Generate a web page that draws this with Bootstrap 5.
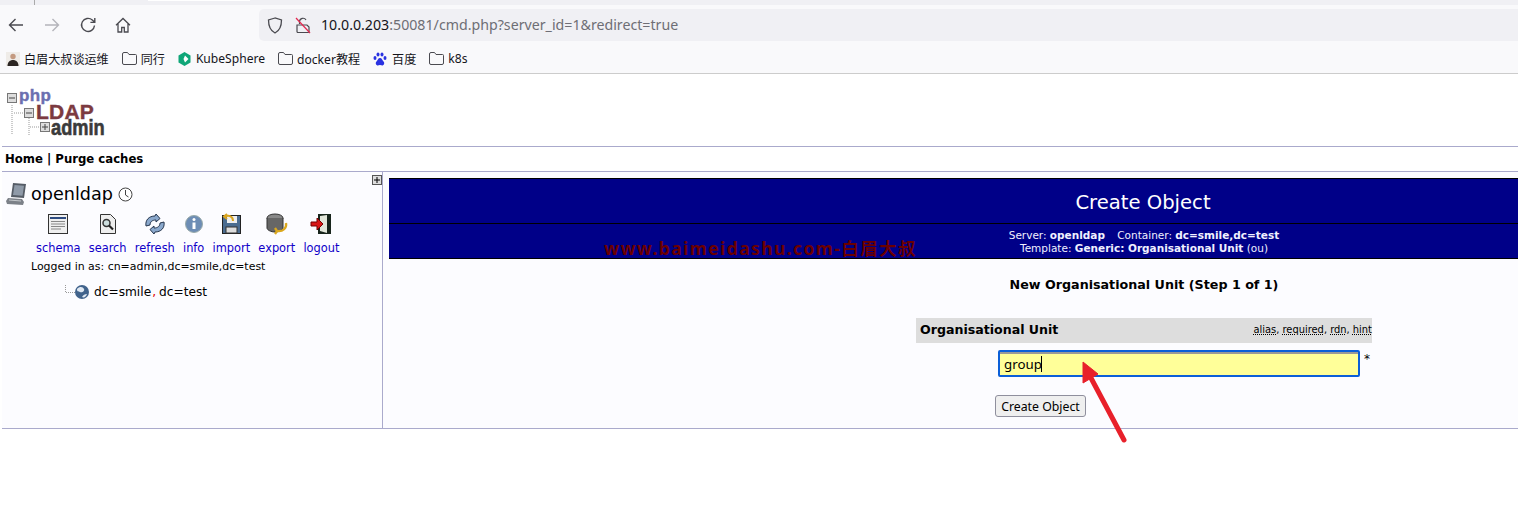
<!DOCTYPE html>
<html lang="en">
  <head>
    <meta charset="UTF-8" />
    <title>phpLDAPadmin</title>
    <link href="https://cdn.jsdelivr.net/npm/bootstrap@5.3.0/dist/css/bootstrap.min.css" rel="stylesheet" />
    <style>
      html, body { height: 513px; overflow: hidden; background: #fff; }
      body { width: 1518px; position: relative; font-family: "DejaVu Sans", Verdana, sans-serif; color: #000; }
      .tab-strip { height: 5px; background: #f0f0f4; position: relative; }
      .tab-strip .sliver { position: absolute; left: 148px; top: 0; width: 102px; height: 1px; background: #fff; }
      .tab-strip .sep { position: absolute; left: 34px; top: 0; width: 1px; height: 5px; background: #aaa; }
      .tool-bar { height: 39px; background: #f9f9fb; padding-top: 1px; }
      .nav-btn { width: 16px; height: 16px; flex: none; }
      .url-box { position: absolute; left: 259px; top: 9px; right: 0; height: 32px; background: #f0f0f4; border-radius: 5px 0 0 5px;
        font: 14.2px "Noto Sans", sans-serif; color: #15141a; padding-left: 62px; line-height: 32px; }
      .url-box em { font-style: normal; color: #6e6e75; }
      .url-box svg { position: absolute; top: 8px; }
      .book-bar { height: 29px; background: #f9f9fb; border-bottom: 1px solid #ccc; padding-left: 6px; gap: 13px;
        font: 12.1px "Noto Sans", "Noto Sans CJK SC", sans-serif; color: #15141a; box-sizing: content-box; }
      .book-item { display: flex; align-items: center; gap: 4px; }
      .logo-area { height: 72px; position: relative; }
      .logo-word { position: absolute; font-family: "Liberation Sans", Arial, sans-serif; font-weight: 700; transform-origin: left center; -webkit-text-stroke: .4px currentColor; }
      .w-php { left: 19px; top: 15px; font-size: 17px; line-height: 13px; color: #6b6fb0; letter-spacing: .4px; }
      .w-ldap { left: 36px; top: 30px; font-size: 21px; line-height: 15px; color: #7c3a40; letter-spacing: .2px; }
      .w-admin { left: 51px; top: 46px; font-size: 22px; line-height: 15px; color: #3a3a3a; transform: scaleX(.83); -webkit-text-stroke: .6px currentColor; }
      .logo-area svg { position: absolute; left: 0; top: 0; }
      .menu-row { margin-left: 2px; border-top: 1px solid #aaaacc; border-bottom: 1px solid #aaaacc; height: 26px; padding-left: 3px;
        font-size: 11.7px; font-weight: 700; line-height: 24px; }
      .page-row { height: 256px; margin-left: 2px; border-bottom: 1px solid #aaaacc; box-sizing: content-box; background: #fcfcff; }
      .side-col { width: 381px; flex: none; border-right: 1px solid #aaaacc; position: relative; }
      .expand-box { position: absolute; right: 0; top: 3px; width: 10px; height: 10px; }
      .server-name { font-size: 17.6px; line-height: 24px; padding: 10px 0 0 4px; gap: 4px; }
      .side-tools { padding-left: 34px; gap: 8.2px; margin-top: 7px; font-size: 11.4px; }
      .side-tool { text-align: center; color: #1000c8; line-height: 14px; }
      .side-tool svg { display: block; margin: 0 auto 6px; }
      .logged-as { font-size: 10.95px; margin: 5px 0 0 29px; line-height: 14px; }
      .tree-row { padding-left: 63px; margin-top: 9px; font-size: 12.2px; gap: 3px; line-height: 18px; }
      .tree-row b { font-weight: 400; color: #e00000; margin: 0 3px 0 1px; }
      .main-col { padding-left: 6px; flex-grow: 1; padding-top: 6px; min-width: 0; }
      .title-band { background: #000088; color: #fff; border: solid #000; border-width: 1px 0; height: 81px; text-align: center; padding-left: 381px; }
      .title-top { height: 45px; line-height: 48px; font-size: 19.6px; margin-left: -381px; padding-left: 379px; border-bottom: 1px solid #000; }
      .title-sub { font-size: 10.5px; line-height: 13px; padding-top: 5px; color: #f0f0ff; }
      .title-sub span { margin-left: 9px; }
      .form-side { padding-left: 381px; }
      .step-line { text-align: center; font-size: 12.7px; font-weight: 700; margin-top: 17px; line-height: 18px; }
      .attr-wrap { width: 456px; margin: 24px auto 0; }
      .attr-head { background: #dddddd; height: 25px; padding: 0 0 0 4px; font-size: 12.6px; font-weight: 700; }
      .attr-hint { font-size: 9.9px; font-weight: 400; }
      .attr-hint u { text-decoration: underline dotted; }
      .attr-input { width: 362px; height: 27px; margin: 7px 0 0 82px; position: relative; }
      .attr-input input { width: 100%; height: 100%; background: #ffff99; border: 2px solid #0b5fd8; border-radius: 2px; box-shadow: inset 0 2px 0 #999; outline: 0; padding: 0 4px; caret-color: transparent;
        font: 13.3px "Noto Sans", sans-serif; color: #000; }
      .fake-caret { position: absolute; left: 43px; top: 6px; width: 1px; height: 16px; background: #000; }
      .req-star { position: absolute; left: 366px; top: 0; font-size: 12px; }
      .make-btn { margin: 18px 0 0 79px; width: 91px; height: 22px; padding: 0; background: #efefef; border: 1px solid #8f8f9d; border-radius: 3px;
        font: 12.3px "Noto Sans", sans-serif; color: #000; display: block; }
      .water-text { position: absolute; left: 604px; top: 237px; font: 700 17.5px/22px "Noto Sans", "Noto Sans CJK SC", sans-serif; color: #6b0000; letter-spacing: 1.4px; white-space: nowrap; }
      .arrow-over { position: absolute; left: 0; top: 0; pointer-events: none; }
    </style>
  </head>
  <body>
    <div class="tab-strip"><span class="sep"></span><span class="sliver"></span></div>

    <div class="tool-bar d-flex align-items-center">
      <svg class="nav-btn" style="margin-left:8px" viewBox="0 0 16 16" fill="none" stroke="#4a4a50" stroke-width="1.4"><path d="M15 8H1.5M7.5 2 1.5 8l6 6"/></svg>
      <svg class="nav-btn" style="margin-left:20px" viewBox="0 0 16 16" fill="none" stroke="#b4b4ba" stroke-width="1.4"><path d="M1 8h13.5M8.5 2l6 6-6 6"/></svg>
      <svg class="nav-btn" style="margin-left:20px" viewBox="0 0 16 16" fill="none" stroke="#4a4a50" stroke-width="1.4"><path d="M14.5 8.5A6.5 6.5 0 1 1 12.3 3L14.5 5M14.8 1v4.4h-4.4"/></svg>
      <svg class="nav-btn" style="margin-left:19px" viewBox="0 0 16 16" fill="none" stroke="#4a4a50" stroke-width="1.3"><path d="M1 8.2 8 1.5l7 6.7M3 6.5V15h3.7v-4.5h2.6V15H13V6.5"/></svg>
    </div>
    <div class="url-box">
      <svg style="left:8px" width="16" height="17" viewBox="0 0 16 17" fill="none" stroke="#4a4a50" stroke-width="1.3"><path d="M8 1 1.5 3c0 6 1.5 10.500 6.500 13 5-2.500 6.500-7 6.500-13z"/></svg>
      <svg style="left:36px" width="16" height="17" viewBox="0 0 16 17" fill="none" stroke-width="1.2"><path stroke="#4a4a50" d="M4.500 7V4.500a3.500 3.500 0 0 1 6.500-1.500M2 8h10l2 2v4.500a1 1 0 0 1-1 1H3a1 1 0 0 1-1-1z"/><path stroke="#e22850" d="M1 1l14 15"/></svg>
      10.0.0.203<em>:50081/cmd.php?server_id=1&amp;redirect=true</em>
    </div>

    <div class="book-bar d-flex align-items-center">
      <div class="book-item">
        <svg width="14" height="14" viewBox="0 0 14 14"><rect width="14" height="14" fill="#efece8"/><circle cx="7" cy="4.500" r="2.700" fill="#c49a80"/><path d="M1.500 14c0-4 2.500-6 5.500-6s5.500 2 5.500 6z" fill="#2b2522"/></svg>
        <span>白眉大叔谈运维</span>
      </div>
      <div class="book-item">
        <svg width="15" height="13" viewBox="0 0 15 13" fill="none" stroke="#4a4a50"><path d="M.5 2a1.500 1.500 0 0 1 1.500-1.500h3.500l1.500 2h6.500a1 1 0 0 1 1 1V11a1.500 1.500 0 0 1-1.500 1.500H2A1.500 1.500 0 0 1 .5 11z"/></svg>
        <span>同行</span>
      </div>
      <div class="book-item" style="gap:5px">
        <svg width="13" height="14" viewBox="0 0 13 14"><path d="M6.500 0 12.500 3.500v7L6.500 14 .5 10.500v-7z" fill="#0fa678"/><path d="M7 3.500 10.500 7 7 10.500 5.500 7z" fill="#fff"/></svg>
        <span>KubeSphere</span>
      </div>
      <div class="book-item">
        <svg width="15" height="13" viewBox="0 0 15 13" fill="none" stroke="#4a4a50"><path d="M.5 2a1.500 1.500 0 0 1 1.500-1.500h3.500l1.500 2h6.500a1 1 0 0 1 1 1V11a1.500 1.500 0 0 1-1.500 1.500H2A1.500 1.500 0 0 1 .5 11z"/></svg>
        <span>docker教程</span>
      </div>
      <div class="book-item" style="gap:5px">
        <svg width="14" height="14" viewBox="0 0 14 14" fill="#2932e1"><ellipse cx="2" cy="6" rx="1.500" ry="2"/><ellipse cx="5" cy="2.500" rx="1.500" ry="2"/><ellipse cx="9" cy="2.500" rx="1.500" ry="2"/><ellipse cx="12" cy="6" rx="1.500" ry="2"/><path d="M7 6c-2 0-2 2-3.500 3.500C2 11 3 13.500 5 13.500c1 0 1.300-.4 2-.4s1 .4 2 .4c2 0 3-2.500 1.500-4C9 8 9 6 7 6z"/></svg>
        <span>百度</span>
      </div>
      <div class="book-item">
        <svg width="15" height="13" viewBox="0 0 15 13" fill="none" stroke="#4a4a50"><path d="M.5 2a1.500 1.500 0 0 1 1.500-1.500h3.500l1.500 2h6.500a1 1 0 0 1 1 1V11a1.500 1.500 0 0 1-1.500 1.500H2A1.500 1.500 0 0 1 .5 11z"/></svg>
        <span>k8s</span>
      </div>
    </div>

    <div class="logo-area">
      <svg width="60" height="72" viewBox="0 0 60 72">
        <path d="M12 31v30M14 39h9M29 44v17M30 53h10" fill="none" stroke="#ccc" stroke-dasharray="1 1" stroke-width="2"/>
        <rect x="7.500" y="19.500" width="9" height="9" fill="#ddd" stroke="#777"/><path d="M9 24h6" stroke="#444"/>
        <rect x="24.500" y="34.500" width="9" height="9" fill="#ddd" stroke="#777"/><path d="M26 39h6" stroke="#444"/>
        <rect x="40.500" y="48.500" width="9" height="9" fill="#ddd" stroke="#777"/><path d="M42 53h6M45 50v6" stroke="#444"/>
      </svg>
      <span class="logo-word w-php">php</span>
      <span class="logo-word w-ldap">LDAP</span>
      <span class="logo-word w-admin">admin</span>
    </div>

    <div class="menu-row">Home | Purge caches</div>

    <div class="page-row d-flex">
      <div class="side-col">
        <svg class="expand-box" viewBox="0 0 10 10"><rect x=".5" y=".5" width="9" height="9" fill="#ddd" stroke="#555"/><path d="M2 5h6M5 2v6" stroke="#000"/></svg>
        <div class="server-name d-flex align-items-center">
          <svg width="21" height="24" viewBox="0 0 21 24"><path d="M7 1l13 1-2 14-13-1z" fill="#555c66"/><path d="M8.500 3l9.500.8-1.500 10-9.500-.8z" fill="#8f9aa8"/><path d="M2 16l14 1 2 3-1 3-16-1-1-3z" fill="#7c8188"/><path d="M3 18l12 1" stroke="#c4c8cc"/></svg>
          <span>openldap</span>
          <svg style="margin-left:1px" width="15" height="15" viewBox="0 0 15 15" fill="#fff" stroke="#444"><circle cx="7.500" cy="7.500" r="6.500"/><path d="M7.500 3v5l3 2" fill="none"/></svg>
        </div>
        <div class="side-tools d-flex">
          <div class="side-tool">
            <svg width="22" height="22" viewBox="0 0 22 22"><rect x="1.500" y="1.500" width="19" height="19" fill="#efefef" stroke="#333"/><path d="M3 5h16" stroke="#2c4a80" stroke-width="2"/><path d="M4 8.500h14M4 11h14M4 13.500h14M4 16h10" stroke="#888"/></svg>
            schema
          </div>
          <div class="side-tool">
            <svg width="22" height="22" viewBox="0 0 22 22"><path d="M3.500 1.500h10l5 5v14h-15z" fill="#eee" stroke="#333"/><circle cx="9.500" cy="10" r="3.500" fill="#cdd" stroke="#333" stroke-width="1.500"/><path d="M12 12.500l4 4" stroke="#222" stroke-width="2.200"/></svg>
            search
          </div>
          <div class="side-tool">
            <svg width="22" height="22" viewBox="0 0 22 22" fill="#8aa8cc" stroke="#26364e"><path d="M2 13C1 7 5 3 11 3l1-2 4 4.500-4 3.500V7C8 7 6 9 6 12z"/><path d="M20 9c1 6-3 10-9 10l-1 2-4-4.500L10 13v2c4 0 6-2 6-5z"/></svg>
            refresh
          </div>
          <div class="side-tool">
            <svg width="20" height="22" viewBox="0 0 20 22"><circle cx="10" cy="11" r="8.500" fill="#6d8db5" stroke="#9aa"/><circle cx="10" cy="6.500" r="1.500" fill="#fff"/><path d="M10 9.500v6.500" stroke="#fff" stroke-width="3"/></svg>
            info
          </div>
          <div class="side-tool">
            <svg width="22" height="22" viewBox="0 0 22 22"><rect x="2.500" y="2.500" width="18" height="18" fill="#4a6c90" stroke="#222"/><rect x="7" y="3" width="10" height="7" fill="#eee"/><rect x="6" y="14" width="11" height="6" fill="#ddd" stroke="#333"/><path d="M13 8C13 3 9 2 5 3.500M7 1 4 3.500 7 6" fill="none" stroke="#d9a520" stroke-width="2"/></svg>
            import
          </div>
          <div class="side-tool">
            <svg width="24" height="22" viewBox="0 0 24 22"><ellipse cx="10" cy="5" rx="8" ry="4" fill="#888" stroke="#333"/><path d="M2 5v10c0 2 4 4 8 4s8-2 8-4V5" fill="#666" stroke="#333"/><path d="M21 10c1 5-3 9-9 8M10 15l2 3-2 3" fill="none" stroke="#dba81e" stroke-width="2.300"/></svg>
            export
          </div>
          <div class="side-tool">
            <svg width="22" height="22" viewBox="0 0 22 22"><rect x="8" y="1" width="13" height="20" fill="#18251c"/><path d="M10 3l7-1v18l-7-2z" fill="#e2e6da"/><path d="M1 9h6V5l6 6-6 6v-4H1z" fill="#d81818" stroke="#700"/></svg>
            logout
          </div>
        </div>
        <div class="logged-as">Logged in as: cn=admin,dc=smile,dc=test</div>
        <div class="tree-row d-flex align-items-center">
          <svg width="26" height="16" viewBox="0 0 26 16"><path d="M.5 1v7.500H10" fill="none" stroke="#999" stroke-dasharray="1 1"/><circle cx="17" cy="8" r="7" fill="#41638c"/><path d="M12 5c3-3 6-2 7 0s-2 4-4 3-3 0-3-3zM17 13c1-2 3-3 5-3-1 3-3 4-5 3z" fill="#dfe8f2"/></svg>
          <span>dc=smile<b>,</b>dc=test</span>
        </div>
      </div>

      <div class="main-col">
        <div class="title-band">
          <div class="title-top">Create Object</div>
          <div class="title-sub">
            <div>Server: <strong>openldap</strong> <span>Container: <strong>dc=smile,dc=test</strong></span></div>
            <div>Template: <strong>Generic: Organisational Unit</strong> (ou)</div>
          </div>
        </div>
        <div class="form-side">
          <div class="step-line">New Organisational Unit (Step 1 of 1)</div>
          <div class="attr-wrap">
            <div class="attr-head d-flex justify-content-between align-items-center">
              <span>Organisational Unit</span>
              <span class="attr-hint"><u>alias</u>, <u>required</u>, <u>rdn</u>, <u>hint</u></span>
            </div>
            <div class="attr-input">
              <input type="text" value="group" />
              <span class="fake-caret"></span>
              <span class="req-star">*</span>
            </div>
            <button type="button" class="make-btn">Create Object</button>
          </div>
        </div>
      </div>
    </div>

    <div class="water-text">www.baimeidashu.com-白眉大叔</div>

    <svg class="arrow-over" width="1518" height="513" viewBox="0 0 1518 513">
      <path d="M1091 378 1124 440" fill="none" stroke="#e8202a" stroke-width="5" stroke-linecap="round"/>
      <path d="M1083 362 1098 374 1083 383z" fill="#e8202a" stroke="#e8202a" stroke-linejoin="round"/>
    </svg>
  </body>
</html>
